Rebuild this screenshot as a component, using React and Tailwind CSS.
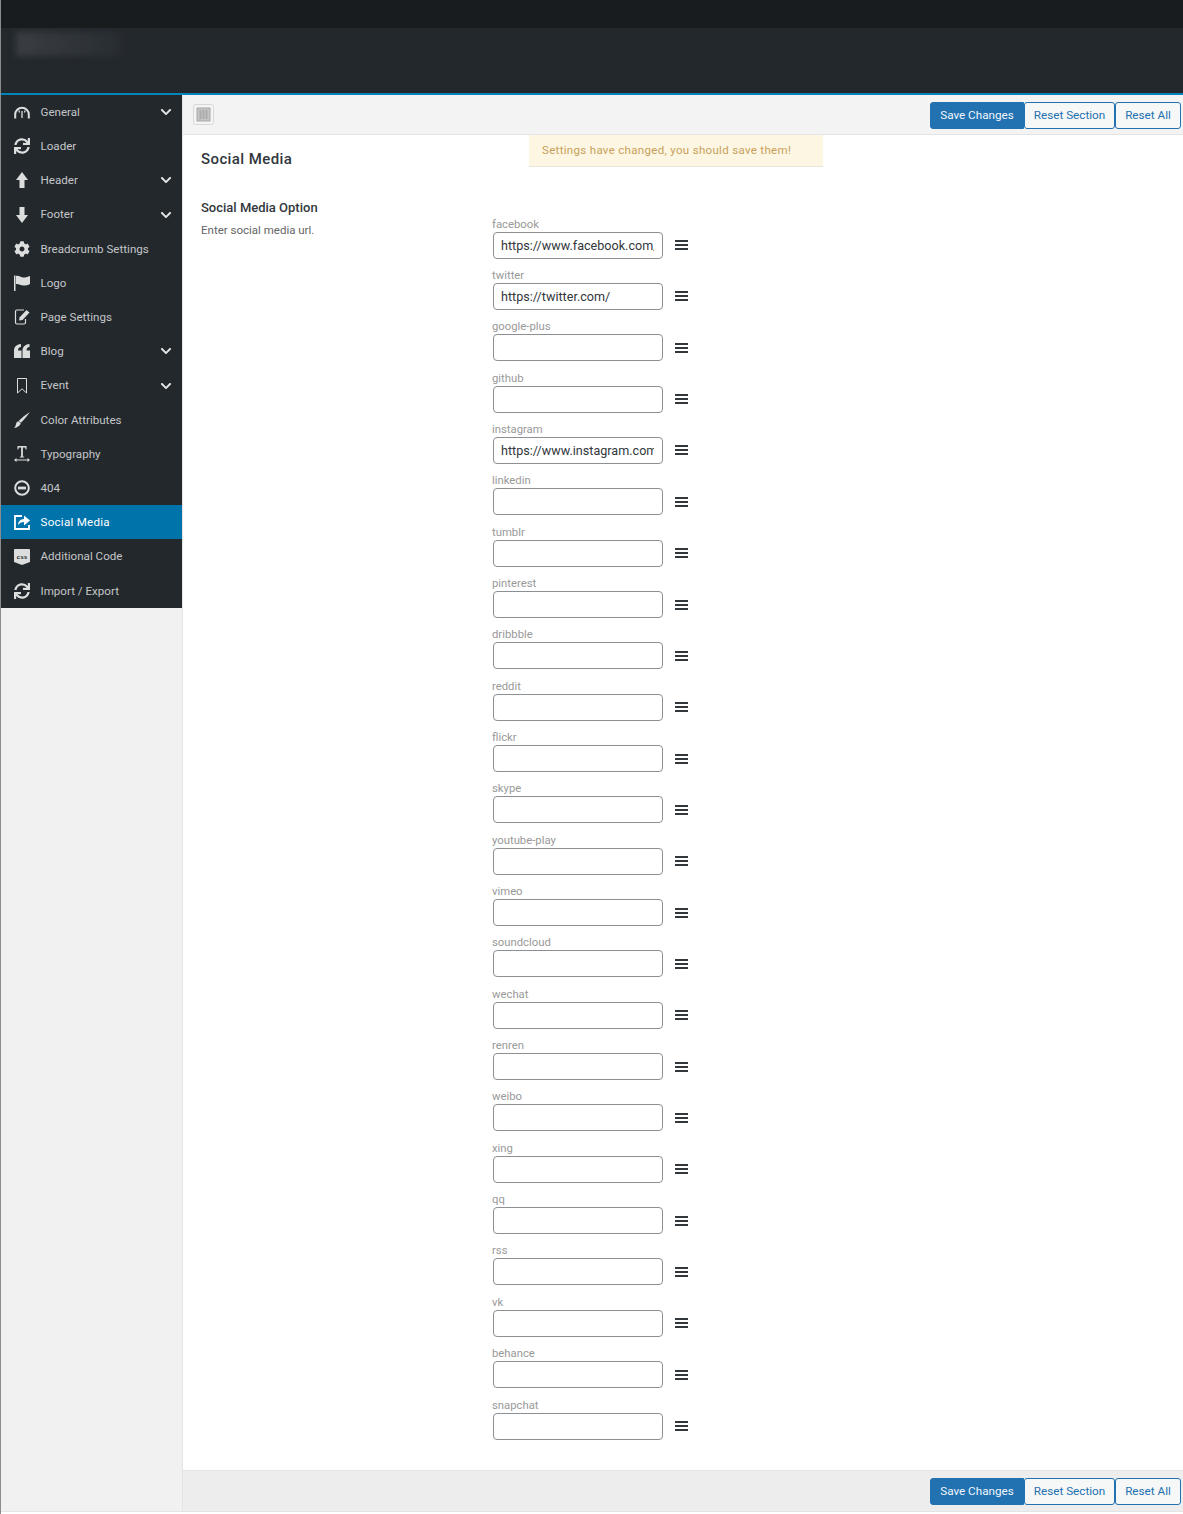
import { FaSync, FaCog, FaChevronDown } from "react-icons/fa";

const fields = [
  { name: "facebook", value: "https://www.facebook.com/" },
  { name: "twitter", value: "https://twitter.com/" },
  { name: "google-plus" },
  { name: "github" },
  { name: "instagram", value: "https://www.instagram.com/" },
  { name: "linkedin" },
  { name: "tumblr" },
  { name: "pinterest" },
  { name: "dribbble" },
  { name: "reddit" },
  { name: "flickr" },
  { name: "skype" },
  { name: "youtube-play" },
  { name: "vimeo" },
  { name: "soundcloud" },
  { name: "wechat" },
  { name: "renren" },
  { name: "weibo" },
  { name: "xing" },
  { name: "qq" },
  { name: "rss" },
  { name: "vk" },
  { name: "behance" },
  { name: "snapchat" },
];

function Gauge() {
  return (
    <svg viewBox="0 0 16 13" className="w-4 h-[13px]" fill="none" stroke="currentColor">
      <path d="M1.2 12.500V8.500a6.800 6.800 0 0 1 13.600 0v4" strokeWidth="2" />
      <path d="M8 5v7M4.800 4.500l.8 2M11.200 4.500l-.8 2" strokeWidth="1.300" />
    </svg>
  );
}

function ArrowUp() {
  return (
    <svg viewBox="0 0 12 16" className="w-3 h-4" fill="currentColor">
      <path d="M6 0l6 8H8.500v8h-5V8H0z" />
    </svg>
  );
}

function ArrowDown() {
  return (
    <svg viewBox="0 0 12 16" className="w-3 h-4" fill="currentColor">
      <path d="M6 16l6-8H8.500V0h-5v8H0z" />
    </svg>
  );
}

function Flag() {
  return (
    <svg viewBox="0 0 16 16" className="w-4 h-4" fill="currentColor">
      <path d="M0 .500h1.500V16H0z" />
      <path d="M2 1c2.500-.8 4.500 1.500 7.500 1.500 2.500 0 4.500-.7 6.500-1.500v8c-2 1-4 1.500-6.500 1.500C6.500 10.500 4.500 8.500 2 9z" />
    </svg>
  );
}

function PageEdit() {
  return (
    <svg viewBox="0 0 16 16" className="w-4 h-4" fill="none" stroke="currentColor">
      <path d="M10 1H3a1.500 1.500 0 0 0-1.500 1.500v11A1.500 1.500 0 0 0 3 15h7a1.500 1.500 0 0 0 1.500-1.500V10" strokeWidth="1.200" />
      <path d="M5 11.500l.7-3.300L12.500 1 15.500 3.500 8.500 11z" fill="currentColor" stroke="none" />
    </svg>
  );
}

function Quote() {
  return (
    <svg viewBox="0 0 16 14" className="w-4 h-[14px]" fill="currentColor">
      <path d="M0 7C0 3 2 .500 7 0v3C5 3.300 4.200 4.300 4 6.500h3.500V14H0z" />
      <path d="M8.500 7c0-4 2-6.500 7-7v3c-2 .3-2.800 1.300-3 3.500H16V14H8.500z" />
    </svg>
  );
}

function Bookmark() {
  return (
    <svg viewBox="0 0 10 16" className="w-[10px] h-4" fill="none" stroke="currentColor" strokeWidth="1">
      <path d="M.500.500h9v14.500L5 10.800.500 15z" />
    </svg>
  );
}

function Brush() {
  return (
    <svg viewBox="0 0 16 16" className="w-4 h-4" fill="currentColor">
      <path d="M16 0C13.500 3.500 9.500 8 7 10.800L4.600 9C7.500 6 12 2.500 16 0z" />
      <path d="M4.200 9.300l2.600 1.900C6.200 13.500 3.500 15.500 0 16c1.500-1.500 1.800-3 2.100-4.300.3-1.200 1-2 2.100-2.400z" />
    </svg>
  );
}

function TextWidth() {
  return (
    <svg viewBox="0 0 16 16" className="w-4 h-4" fill="currentColor">
      <path d="M3.500 0h9v3.500h-.8L11 1.400H8.900v9l1.300.4v.7H5.800v-.7l1.300-.4v-9H5L4.300 3.500h-.8z" />
      <path d="M0 14l2.500-2v1.500h11V12l2.500 2-2.500 2v-1.500h-11V16z" />
    </svg>
  );
}

function MinusCircle() {
  return (
    <svg viewBox="0 0 16 16" className="w-4 h-4" fill="none" stroke="currentColor">
      <circle cx="8" cy="8" r="6.800" strokeWidth="2" />
      <path d="M4 8h8" strokeWidth="2.800" />
    </svg>
  );
}

function ShareBox() {
  return (
    <svg viewBox="0 0 16 16" className="w-4 h-4">
      <path d="M8 2H1v13h14v-4" fill="none" stroke="currentColor" strokeWidth="1.800" />
      <path d="M4 11c.2-3.500 2.500-5.800 6-6V1.500L16 6.500 10 11.500V8c-2.500 0-4.500 1-6 3z" fill="currentColor" />
    </svg>
  );
}

function CssBadge() {
  return (
    <svg viewBox="0 0 16 16" className="w-4 h-4">
      <path d="M0 1a1 1 0 0 1 1-1h14a1 1 0 0 1 1 1v12l-8 3-8-3z" fill="currentColor" />
      <text x="8" y="9.500" textAnchor="middle" fontSize="6" fontWeight="700" fontFamily="Liberation Mono, monospace" fill="#23282d">css</text>
    </svg>
  );
}

function LayoutIcon() {
  return (
    <svg viewBox="0 0 21 21" className="w-[21px] h-[21px]">
      <rect x="0.500" y="0.500" width="20" height="20" rx="2" fill="#f4f4f4" stroke="#d8d8d8" />
      <rect x="4" y="4" width="13" height="13" fill="#c4c4c4" stroke="#a8a8a8" />
      <rect x="6.500" y="6" width="8" height="9" fill="#ababab" />
      <path d="M9 6v9M12 6v9" stroke="#c8c8c8" />
    </svg>
  );
}

const menu = [
  { label: "General", icon: <Gauge />, arrow: true },
  { label: "Loader", icon: <FaSync size={16} /> },
  { label: "Header", icon: <ArrowUp />, arrow: true },
  { label: "Footer", icon: <ArrowDown />, arrow: true },
  { label: "Breadcrumb Settings", icon: <FaCog size={16} /> },
  { label: "Logo", icon: <Flag /> },
  { label: "Page Settings", icon: <PageEdit /> },
  { label: "Blog", icon: <Quote />, arrow: true },
  { label: "Event", icon: <Bookmark />, arrow: true },
  { label: "Color Attributes", icon: <Brush /> },
  { label: "Typography", icon: <TextWidth /> },
  { label: "404", icon: <MinusCircle /> },
  { label: "Social Media", icon: <ShareBox />, active: true },
  { label: "Additional Code", icon: <CssBadge /> },
  { label: "Import / Export", icon: <FaSync size={16} /> },
];

function Buttons() {
  return (
    <div className="flex text-[11.7px]">
      <button className="h-[27px] w-[94px] bg-[#2271b1] border border-[#2271b1] rounded-l-[3px] text-[#f0f6fc]">Save Changes</button>
      <button className="h-[27px] w-[91px] bg-[#f6f7f7] border border-[#2271b1] rounded-[3px] text-[#2271b1]">Reset Section</button>
      <button className="h-[27px] w-[66px] bg-[#f6f7f7] border border-[#2271b1] rounded-[3px] text-[#2271b1]">Reset All</button>
    </div>
  );
}

export default function App() {
  return (
    <div className="h-[1514px] bg-white border-l border-[#8c8c8c] font-['Roboto',sans-serif] flex flex-col">
      <div className="h-[28px] bg-[#181c1f]" />
      <div className="h-[65px] bg-[#23282d] pt-1 pl-[15px]">
        <div className="w-[105px] h-6 bg-linear-to-r from-[#3a3e43] to-[#282d32] blur-[3px]" />
      </div>
      <div className="h-[2px] bg-[#0085ba]" />

      <div className="flex h-[1417px] border-b border-[#e4e4e4]">
        {/* Sidebar */}
        <div className="w-[182px] shrink-0 bg-[#f1f1f1] border-r border-[#e4e4e4]">
          <div className="bg-[#23282d]">
            {menu.map((item) => (
              <div
                key={item.label}
                className={`h-[34.2px] flex items-center text-[11.6px] ${item.active ? "bg-[#0073aa] text-white tracking-[0.25px]" : "text-[#c4c6c8]"}`}
              >
                <span className={`w-4 ml-[13px] mr-[10.5px] flex justify-center items-center ${item.active ? "text-white" : "text-[#dcdddd]"}`}>
                  {item.icon}
                </span>
                <span className="flex-1 pt-px">{item.label}</span>
                {item.arrow && <FaChevronDown size={12} className="mr-[10px] text-[#e4e4e4]" />}
              </div>
            ))}
          </div>
        </div>

        {/* Main panel */}
        <div className="flex-1 flex flex-col min-w-0">
          <div className="h-[40px] shrink-0 bg-[#f3f3f3] border-b border-[#e4e4e4] flex items-center justify-between pl-[10px] pr-[2px]">
            <LayoutIcon />
            <div className="mt-0.5">
              <Buttons />
            </div>
          </div>

          <div className="flex-1 bg-white">
            <div className="flex items-start">
              <h2 className="w-[346px] pl-[18px] pt-[14px] text-[15px] leading-[20px] font-medium text-[#32373c] tracking-[0.4px]">Social Media</h2>
              <div className="w-[294px] h-[32px] bg-[#fcf6e3] border-b border-[#e9e5d6] flex items-center pl-[13px] pt-px text-[11.5px] text-[#c8a15a] tracking-[0.32px]">
                Settings have changed, you should save them!
              </div>
            </div>

            <div className="flex mt-[17px]">
              <div className="w-[309px] pl-[18px] pt-[13px]">
                <div className="text-[13px] leading-[18px] font-medium text-[#32373c]">Social Media Option</div>
                <div className="mt-[5px] text-[11.5px] leading-[16px] text-[#666666]">Enter social media url.</div>
              </div>
              <div className="pt-[31.6px]">
                {fields.map((f) => (
                  <div key={f.name} className="h-[51.35px]">
                    <div className="text-[11.3px] leading-[14px] text-[#999999]">{f.name}</div>
                    <div className="flex items-center">
                      <input
                        readOnly
                        value={f.value || ""}
                        className="ml-px w-[170px] h-[27px] pl-[7px] pr-2 border border-[#8c8f94] rounded-[4px] bg-white text-[12.6px] text-[#32373c] outline-none"
                      />
                      <div className="ml-[11.5px] w-[13px] flex flex-col gap-[2px]">
                        <span className="h-[2px] bg-[#32373c]" />
                        <span className="h-[2px] bg-[#32373c]" />
                        <span className="h-[2px] bg-[#32373c]" />
                      </div>
                    </div>
                  </div>
                ))}
              </div>
            </div>
          </div>

          <div className="h-[41px] shrink-0 bg-[#ededed] border-t border-[#e4e4e4] flex items-start justify-end pt-[7px] pr-[2px]">
            <Buttons />
          </div>
        </div>
      </div>
    </div>
  );
}
